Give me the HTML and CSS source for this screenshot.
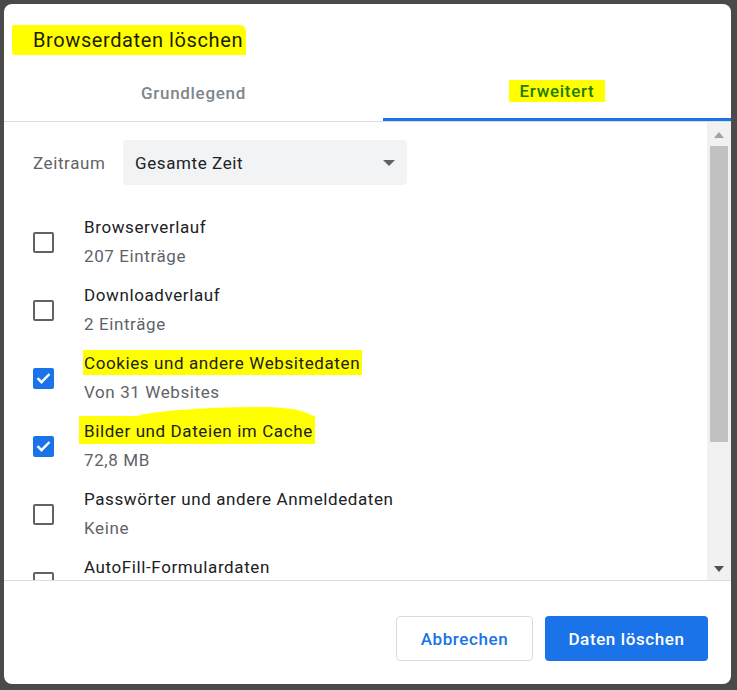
FILE: index.html
```html
<!DOCTYPE html>
<html lang="de">
<head>
    <meta charset="UTF-8">
    <title>Browserdaten löschen</title>
    <link rel="stylesheet" href="styles.css">
</head>
<body>
    <div class="dialog">
        <div class="dialog-title">
            <span class="mark mark-title">Browserdaten löschen</span>
        </div>

        <div class="tabs">
            <div class="tab">Grundlegend</div>
            <div class="tab tab-active"><span class="mark mark-tab">Erweitert</span></div>
        </div>

        <div class="dialog-body">
            <div class="list">
                <div class="range-row">
                    <span class="range-label">Zeitraum</span>
                    <div class="select">
                        <span>Gesamte Zeit</span>
                        <svg class="select-arrow" width="12" height="6" viewBox="0 0 12 6"><path d="M0 0h12L6 6z" fill="#5f6368"/></svg>
                    </div>
                </div>

                <div class="item">
                    <span class="checkbox"></span>
                    <div class="item-text">
                        <div class="item-title">Browserverlauf</div>
                        <div class="item-sub">207 Einträge</div>
                    </div>
                </div>
                <div class="item">
                    <span class="checkbox"></span>
                    <div class="item-text">
                        <div class="item-title">Downloadverlauf</div>
                        <div class="item-sub">2 Einträge</div>
                    </div>
                </div>
                <div class="item">
                    <span class="checkbox checked">
                        <svg width="15" height="12" viewBox="0 0 15 12"><path d="M1.5 6.2l4 4L13.5 2" fill="none" stroke="#fff" stroke-width="2.4"/></svg>
                    </span>
                    <div class="item-text">
                        <div class="item-title"><span class="mark mark-line">Cookies und andere Websitedaten</span></div>
                        <div class="item-sub">Von 31 Websites</div>
                    </div>
                </div>
                <div class="item">
                    <span class="checkbox checked">
                        <svg width="15" height="12" viewBox="0 0 15 12"><path d="M1.5 6.2l4 4L13.5 2" fill="none" stroke="#fff" stroke-width="2.4"/></svg>
                    </span>
                    <div class="item-text">
                        <div class="item-title"><span class="mark mark-wave">Bilder und Dateien im Cache</span></div>
                        <div class="item-sub">72,8 MB</div>
                    </div>
                </div>
                <div class="item">
                    <span class="checkbox"></span>
                    <div class="item-text">
                        <div class="item-title">Passwörter und andere Anmeldedaten</div>
                        <div class="item-sub">Keine</div>
                    </div>
                </div>
                <div class="item">
                    <span class="checkbox"></span>
                    <div class="item-text">
                        <div class="item-title">AutoFill-Formulardaten</div>
                    </div>
                </div>
            </div>

            <div class="scrollbar">
                <div class="scroll-btn">
                    <svg width="10" height="6" viewBox="0 0 10 6"><path d="M0 6h10L5 0z" fill="#a3a3a3"/></svg>
                </div>
                <div class="scroll-track">
                    <div class="scroll-thumb"></div>
                </div>
                <div class="scroll-btn">
                    <svg width="10" height="6" viewBox="0 0 10 6"><path d="M0 0h10L5 6z" fill="#505050"/></svg>
                </div>
            </div>
        </div>

        <div class="dialog-footer">
            <button class="btn btn-cancel">Abbrechen</button>
            <button class="btn btn-primary">Daten löschen</button>
        </div>
    </div>
</body>
</html>
```

FILE: styles.css
```css
* {
    box-sizing: border-box;
}

body {
    margin: 0;
    padding: 4px;
    height: 690px;
    background: #4a4a4a;
    font-family: Roboto, 'Noto Sans', sans-serif;
    color: #202124;
    overflow: hidden;
}

.dialog {
    width: 727px;
    height: 680px;
    background: #fff;
    border-radius: 8px;
    display: flex;
    flex-direction: column;
    overflow: hidden;
}

/* highlighter marks */
.mark {
    background: #ffff00;
}

.dialog-title {
    height: 56px;
    padding: 21px 0 0 8px;
}

.mark-title {
    display: inline-block;
    height: 30px;
    line-height: 31px;
    padding: 0 3px 0 21px;
    font-size: 20px;
    letter-spacing: 0.6px;
    color: #1d1d00;
    border-radius: 2px 6px 1px 3px;
}

.tabs {
    display: grid;
    grid-template-columns: 379px 1fr;
    height: 62px;
    border-bottom: 1px solid #dadce0;
}

.tab {
    display: flex;
    align-items: center;
    justify-content: center;
    padding-top: 5px;
    font-size: 17px;
    letter-spacing: 0.7px;
    font-weight: 500;
    color: #80868b;
}

.tab-active {
    box-shadow: inset 0 -3px 0 #1a73e8;
}

.mark-tab {
    display: inline-block;
    line-height: 22px;
    padding: 0 11px 0 11px;
    margin-top: -5px;
    color: #227a00;
}

.dialog-body {
    height: 458px;
    display: flex;
}

.list {
    flex: 1;
    overflow: hidden;
    padding: 18px 0 0 29px;
    isolation: isolate;
    font-size: 17px;
    letter-spacing: 0.6px;
}

.range-row {
    display: flex;
    align-items: center;
    height: 45px;
    margin-bottom: 23px;
}

.range-label {
    width: 90px;
    color: #5f6368;
}

.select {
    width: 284px;
    height: 45px;
    background: #f1f3f4;
    border-radius: 4px;
    display: flex;
    align-items: center;
    justify-content: space-between;
    padding: 0 12px;
}

.item {
    display: flex;
    align-items: center;
    height: 68px;
}

.checkbox {
    flex: none;
    width: 21px;
    height: 21px;
    border: 2px solid #5f6368;
    border-radius: 2px;
    margin-right: 30px;
    display: flex;
    align-items: center;
    justify-content: center;
}

.checkbox.checked {
    background: #1a73e8;
    border-color: #1a73e8;
}

.item-text {
    align-self: flex-start;
    padding-top: 5px;
}

.item-title,
.item-sub {
    line-height: 29px;
    white-space: nowrap;
}

.item-sub {
    color: #5f6368;
}

.mark-line {
    padding: 3px 2px 2px 1px;
    margin-left: -1px;
}

.mark-wave {
    position: relative;
    padding: 5px 2px 3px 5px;
    margin-left: -5px;
}

.mark-wave::before {
    content: '';
    position: absolute;
    left: 22%;
    right: 0;
    top: -9px;
    height: 14px;
    background: #ffff00;
    border-radius: 80% 30% 0 0 / 100% 100% 0 0;
    z-index: -1;
}

.scrollbar {
    width: 24px;
    background: #f1f1f1;
    display: flex;
    flex-direction: column;
    padding: 1px 3px 0 3px;
}

.scroll-btn {
    height: 23px;
    display: flex;
    align-items: center;
    justify-content: center;
}

.scroll-track {
    flex: 1;
}

.scroll-thumb {
    height: 296px;
    background: #c1c1c1;
}

.dialog-footer {
    flex: 1;
    border-top: 1px solid #dadce0;
    display: flex;
    justify-content: flex-end;
    align-items: flex-start;
    gap: 12px;
    padding: 35px 23px 0 0;
}

.btn {
    height: 45px;
    border-radius: 4px;
    font-family: Roboto, 'Noto Sans', sans-serif;
    font-size: 17px;
    letter-spacing: 0.6px;
    font-weight: 500;
    cursor: pointer;
}

.btn-cancel {
    width: 137px;
    background: #fff;
    border: 1px solid #dadce0;
    color: #1a73e8;
}

.btn-primary {
    width: 163px;
    background: #1a73e8;
    border: none;
    color: #fff;
}
```
